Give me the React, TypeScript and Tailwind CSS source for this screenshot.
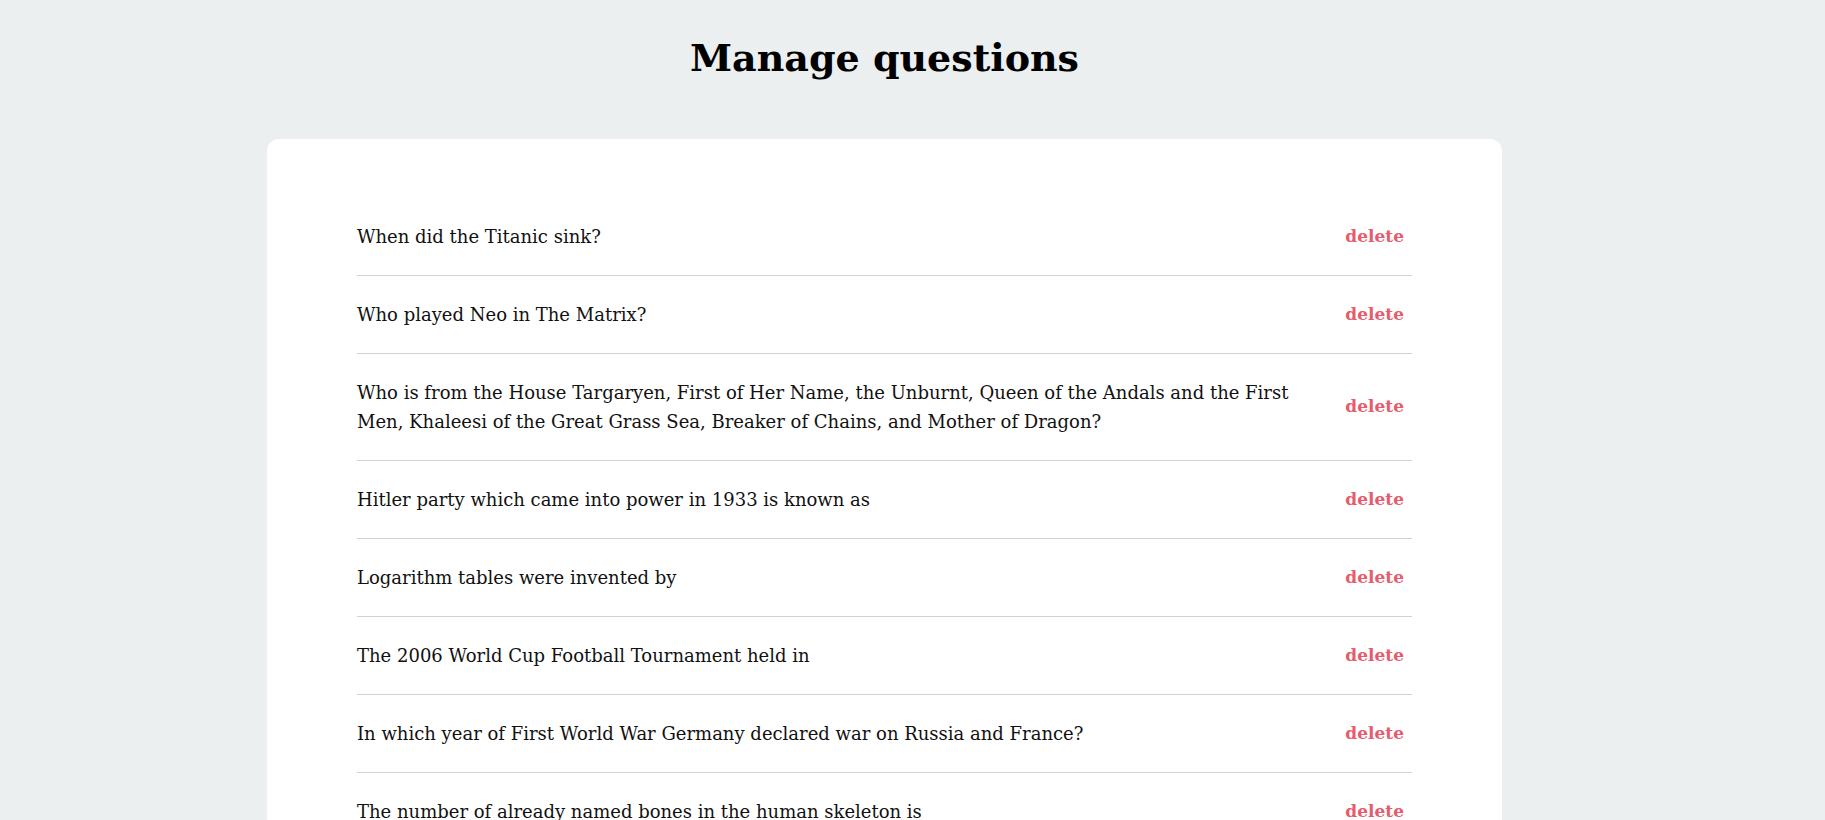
const questions = [
  "When did the Titanic sink?",
  "Who played Neo in The Matrix?",
  "Who is from the House Targaryen, First of Her Name, the Unburnt, Queen of the Andals and the First Men, Khaleesi of the Great Grass Sea, Breaker of Chains, and Mother of Dragon?",
  "Hitler party which came into power in 1933 is known as",
  "Logarithm tables were invented by",
  "The 2006 World Cup Football Tournament held in",
  "In which year of First World War Germany declared war on Russia and France?",
  "The number of already named bones in the human skeleton is",
  "Who is the father of Geometry?",
  "The ozone layer restricts",
];

function QuestionRow({ text }: { text: string }) {
  return (
    <li className="flex items-center justify-between gap-6 border-b border-[#d2d2d2] py-6">
      <span className="max-w-[975px] text-[18px] leading-[29px] text-[#111]">
        {text}
      </span>
      <button className="shrink-0 px-2 text-[17px] font-bold text-[#e65c6c]">
        delete
      </button>
    </li>
  );
}

export default function App() {
  return (
    <div className="min-h-screen bg-[#ebeff0] pr-[56px] font-['DejaVu_Serif',serif]">
      <h1 className="pt-[34px] pb-[57px] text-center text-[38px] leading-[48px] font-bold text-black">
        Manage questions
      </h1>

      <div className="mx-auto w-[1235px] rounded-xl bg-white px-[90px] pt-[59px]">
        <ul>
          {questions.map((q) => (
            <QuestionRow key={q} text={q} />
          ))}
        </ul>
      </div>
    </div>
  );
}
